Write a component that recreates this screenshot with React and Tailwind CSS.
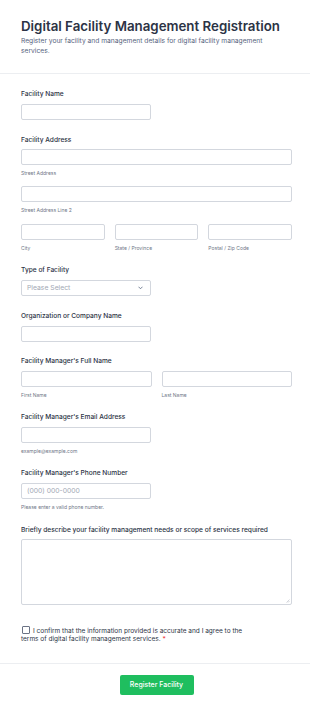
import React from "react";

const inputCls = "block h-[16px] rounded-[2px] border border-[#d3d7de] bg-white";

function Label({ children }) {
  return (
    <div className="text-[6.6px] leading-[10px] font-medium text-[#2c3345]">{children}</div>
  );
}

function Sub({ children }) {
  return <div className="mt-[4.5px] text-[5px] leading-[7px] text-[#6f7787]">{children}</div>;
}

export default function App() {
  return (
    <div className="w-[310px] min-h-[712px] bg-white font-['Inter',sans-serif]">
      <div className="px-[21px] pt-[17px] pb-[17px] border-b border-[#eceef1]">
        <h1 className="text-[13.3px] leading-[19px] font-semibold text-[#2c3345] whitespace-nowrap">
          Digital Facility Management Registration
        </h1>
        <p className="text-[6.7px] leading-[10px] text-[#57647e]">
          Register your facility and management details for digital facility management services.
        </p>
      </div>

      <div className="px-[21px] pt-[15px] pb-[19px]">
        {/* Facility Name */}
        <div>
          <Label>Facility Name</Label>
          <div className={`${inputCls} mt-[5px] w-[130px]`} />
        </div>

        {/* Facility Address */}
        <div className="mt-[15px]">
          <Label>Facility Address</Label>
          <div className={`${inputCls} mt-[4px] w-[271px]`} />
          <Sub>Street Address</Sub>
          <div className={`${inputCls} mt-[9.5px] w-[271px]`} />
          <Sub>Street Address Line 2</Sub>
          <div className="mt-[10.5px] grid grid-cols-3 gap-[10px] w-[271px]">
            <div>
              <div className={inputCls} />
              <Sub>City</Sub>
            </div>
            <div>
              <div className={inputCls} />
              <Sub>State / Province</Sub>
            </div>
            <div>
              <div className={inputCls} />
              <Sub>Postal / Zip Code</Sub>
            </div>
          </div>
        </div>

        {/* Type of Facility */}
        <div className="mt-[13.5px]">
          <Label>Type of Facility</Label>
          <div className={`${inputCls} mt-[5px] w-[130px] flex items-center justify-between pl-[5px] pr-[7px]`}>
            <span className="text-[6.8px] leading-[10px] text-[#a3a9b5]">Please Select</span>
            <svg width="5" height="4" viewBox="0 0 10 8" className="text-[#57647e]">
              <path d="M1.5 2 L5 5.5 L8.5 2" fill="none" stroke="currentColor" strokeWidth="1.6" strokeLinecap="round" strokeLinejoin="round" />
            </svg>
          </div>
        </div>

        {/* Organization */}
        <div className="mt-[15px]">
          <Label>Organization or Company Name</Label>
          <div className={`${inputCls} mt-[5px] w-[130px]`} />
        </div>

        {/* Manager full name */}
        <div className="mt-[14px]">
          <Label>Facility Manager's Full Name</Label>
          <div className="mt-[5px] grid grid-cols-2 gap-[10px] w-[271px]">
            <div>
              <div className={inputCls} />
              <Sub>First Name</Sub>
            </div>
            <div>
              <div className={inputCls} />
              <Sub>Last Name</Sub>
            </div>
          </div>
        </div>

        {/* Email */}
        <div className="mt-[13.5px]">
          <Label>Facility Manager's Email Address</Label>
          <div className={`${inputCls} mt-[5px] w-[130px]`} />
          <Sub>example@example.com</Sub>
        </div>

        {/* Phone */}
        <div className="mt-[13.5px]">
          <Label>Facility Manager's Phone Number</Label>
          <div className={`${inputCls} mt-[5px] w-[130px] flex items-center pl-[5px]`}>
            <span className="text-[6.8px] leading-[10px] text-[#a3a9b5]">(000) 000-0000</span>
          </div>
          <Sub>Please enter a valid phone number.</Sub>
        </div>

        {/* Description */}
        <div className="mt-[14.5px]">
          <Label>Briefly describe your facility management needs or scope of services required</Label>
          <div className="relative mt-[4px] h-[66px] w-[271px] rounded-[2px] border border-[#d3d7de]">
            <svg width="4" height="4" viewBox="0 0 4 4" className="absolute right-[1px] bottom-[1px] text-[#b5bac4]">
              <path d="M0.5 3.5 L3.5 0.5 M2 3.5 L3.5 2" stroke="currentColor" strokeWidth="0.6" />
            </svg>
          </div>
        </div>

        {/* Checkbox */}
        <div className="mt-[20.5px] max-w-[232px] text-[6.5px] leading-[9px] text-[#2c3345]">
          <span className="inline-block align-[-1.5px] mr-[3px] ml-[1px] h-[8px] w-[8px] rounded-[1px] border border-[#6b7385] bg-white" />
          I confirm that the information provided is accurate and I agree to the terms of digital facility management services.&nbsp;<span className="text-[#f23a3c]">*</span>
        </div>
      </div>

      <div className="border-t border-[#eceef1] pt-[11px] flex justify-center">
        <div className="ml-[3px] h-[20px] w-[74px] rounded-[2px] bg-[#1fbe5f] flex items-center justify-center text-[7px] font-medium text-white">
          Register Facility
        </div>
      </div>
    </div>
  );
}
